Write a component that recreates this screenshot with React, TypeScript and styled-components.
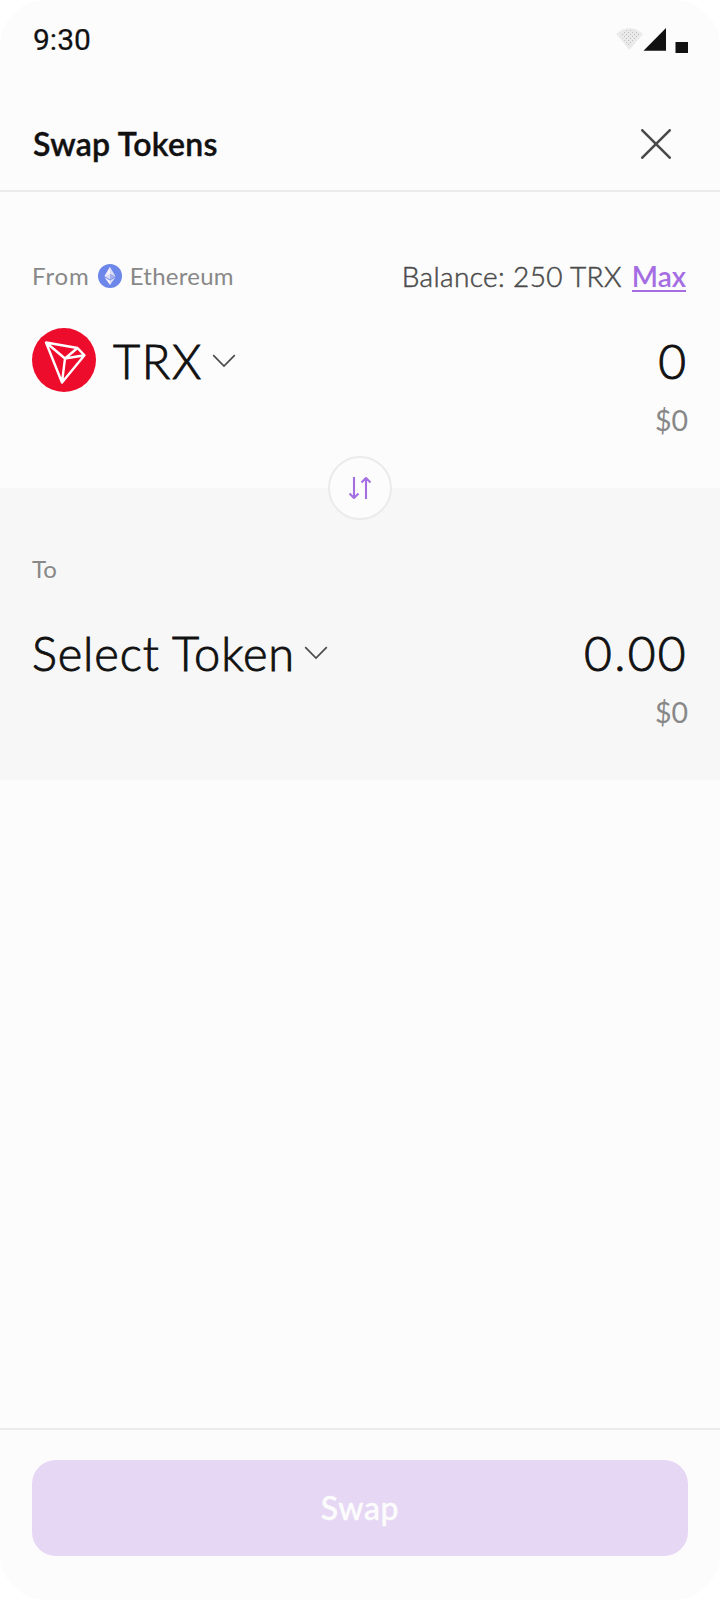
import React from 'react';
import styled, { createGlobalStyle } from 'styled-components';

const Global = createGlobalStyle`
  * { box-sizing: border-box; }
  body { margin: 0; background: #fff; font-family: Lato, "Open Sans", sans-serif; color: #111; }
  svg { display: block; flex: none; }
`;

const Screen = styled.main`
  width: 720px;
  height: 1600px;
  display: flex;
  flex-direction: column;
  background: #fcfcfc;
  border-radius: 46px;
  overflow: hidden;
`;

const StatusBar = styled.div`
  height: 96px;
  padding: 20px 32px 0 33px;
  display: flex;
  justify-content: space-between;
`;

const Clock = styled.span`
  font: 400 30px/40px Roboto, sans-serif;
  -webkit-text-stroke: 0.2px #111;
`;

const Header = styled.header`
  height: 96px;
  padding: 2px 49px 0 33px;
  display: flex;
  align-items: center;
  justify-content: space-between;
  border-bottom: 2px solid #ebebeb;
`;

const Title = styled.h1`
  margin: 0;
  font-size: 32px;
  font-weight: 600;
  line-height: 40px;
  letter-spacing: 0.3px;
  -webkit-text-stroke: 0.4px #111;
`;

const IconButton = styled.button`
  padding: 0;
  border: 0;
  background: none;
`;

const Panel = styled.section<{ $to?: boolean }>`
  position: relative;
  height: ${(p) => (p.$to ? 292 : 296)}px;
  padding: ${(p) => (p.$to ? 63 : 66)}px 32px 0;
  background: ${(p) => (p.$to ? '#f7f7f7' : '#fcfcfc')};
`;

const Line = styled.div`
  height: 36px;
  display: flex;
  align-items: center;
  justify-content: space-between;
`;

const Network = styled.div`
  display: flex;
  align-items: center;
  gap: 8px;
`;

const Label = styled.span<{ $spacing?: number }>`
  font-size: 24px;
  line-height: 36px;
  letter-spacing: ${(p) => p.$spacing ?? 0}px;
  color: #888;
`;

const Balance = styled.div`
  display: flex;
  align-items: center;
  gap: 10px;
  font-size: 28px;
  line-height: 34px;
`;

const BalanceText = styled.span`
  font-weight: 300;
  letter-spacing: 0.37px;
  color: #4b4b4b;
  -webkit-text-stroke: 0.5px #4b4b4b;
`;

const MaxLink = styled.a`
  margin-right: 2px;
  height: 32px;
  line-height: 32px;
  font-weight: 600;
  color: #a56de2;
  border-bottom: 2px solid #a56de2;
`;

const TokenLine = styled.div<{ $gap: number }>`
  height: 64px;
  margin-top: ${(p) => p.$gap}px;
  display: flex;
  align-items: center;
  justify-content: space-between;
`;

const TokenPicker = styled.div`
  display: flex;
  align-items: center;
`;

const Big = styled.span<{ $spacing?: number }>`
  padding-top: 2px;
  font-size: 47px;
  font-weight: 300;
  line-height: 62px;
  letter-spacing: ${(p) => p.$spacing ?? 0}px;
  -webkit-text-stroke: 0.9px #111;
`;

const Amount = styled(Big)`
  font-size: 48px;
`;

const TokenName = styled(Big)<{ $left: number; $right: number }>`
  margin-left: ${(p) => p.$left}px;
  margin-right: ${(p) => p.$right}px;
`;

const Fiat = styled.div`
  margin-top: 8px;
  font-size: 28.5px;
  line-height: 40px;
  text-align: right;
  color: #888;
`;

const Flip = styled.button`
  position: absolute;
  z-index: 1;
  left: 328px;
  bottom: -32px;
  width: 64px;
  height: 64px;
  padding: 0;
  display: grid;
  place-items: center;
  border: 2px solid #ebebeb;
  border-radius: 50%;
  background: #fcfcfc;
`;

const Footer = styled.footer`
  margin-top: auto;
  height: 172px;
  padding: 30px 32px 44px;
  border-top: 2px solid #ebebeb;
`;

const SwapButton = styled.button`
  width: 100%;
  height: 96px;
  padding: 0 0 1px;
  border: 0;
  border-radius: 24px;
  background: #e6d7f4;
  color: #fcfcfc;
  font: 500 32px/40px Lato, sans-serif;
  letter-spacing: 0.6px;
  -webkit-text-stroke: 0.4px #fcfcfc;
`;

const StatusIcons = () => (
  <svg width="72" height="40" viewBox="0 0 72 40">
    <defs>
      <pattern id="dots" width="4" height="4" patternUnits="userSpaceOnUse">
        <rect width="4" height="4" fill="#e9e9e9" />
        <rect width="1" height="1" fill="#bdbdbd" />
        <rect x="2" y="2" width="1" height="1" fill="#bdbdbd" />
      </pattern>
    </defs>
    <path d="M0 14Q13.5 2 27 14L13.5 30Z" fill="#ebebeb" />
    <path d="M3 14Q13.5 5.5 24 14L13.5 27Z" fill="url(#dots)" />
    <path d="M27.5 30.7L50 8V30.7Z" fill="#111" />
    <rect x="59.5" y="22" width="13" height="11" fill="#111" />
  </svg>
);

const Chevron = () => (
  <svg width="24" height="16" viewBox="0 0 24 16" fill="none" stroke="#4b4b4b" strokeWidth="1.7">
    <path d="M1.2 3.2L12 14L22.8 3.2" />
  </svg>
);

const Ethereum = () => (
  <svg width="24" height="24" viewBox="0 0 24 24">
    <circle cx="12" cy="12" r="12" fill="#6c86ea" />
    <path d="M12 3L17.5 12.2L12 15.4L6.5 12.2Z" fill="#d9dcf4" />
    <path d="M12 3V9.7L6.5 12.2ZM12 16.5V21L6.5 13.3Z" fill="#f8f1f6" />
    <path d="M12 9.7L17.5 12.2L12 15.4Z" fill="#a3aeea" />
    <path d="M12 16.5V21L17.5 13.3Z" fill="#d9dcf4" />
  </svg>
);

const Tron = () => (
  <svg width="64" height="64" viewBox="0 0 64 64">
    <circle cx="32" cy="32" r="32" fill="#ed0c2b" />
    <path
      d="M14 14.5L45.5 20L52.5 27.3L30 54.5ZM14 14.5L33 30.5L30 54.5M33 30.5L45.5 20M33 30.5L52.5 27.3"
      fill="none"
      stroke="#fff"
      strokeWidth="2.4"
      strokeLinejoin="round"
    />
  </svg>
);

export default function App() {
  return (
    <>
      <Global />
      <Screen>
        <StatusBar>
          <Clock>9:30</Clock>
          <StatusIcons />
        </StatusBar>
        <Header>
          <Title>Swap Tokens</Title>
          <IconButton aria-label="Close">
            <svg width="30" height="30" viewBox="0 0 30 30" stroke="#4b4b4b" strokeWidth="2.6" strokeLinecap="round">
              <path d="M1.3 1.3L28.7 28.7M28.7 1.3L1.3 28.7" />
            </svg>
          </IconButton>
        </Header>
        <Panel>
          <Line>
            <Network>
              <Label $spacing={0.9}>From</Label>
              <Ethereum />
              <Label $spacing={0.25}>Ethereum</Label>
            </Network>
            <Balance>
              <BalanceText>Balance: 250 TRX</BalanceText>
              <MaxLink>Max</MaxLink>
            </Balance>
          </Line>
          <TokenLine $gap={34}>
            <TokenPicker>
              <Tron />
              <TokenName $left={17} $right={9} $spacing={1.6}>TRX</TokenName>
              <Chevron />
            </TokenPicker>
            <Amount $spacing={2}>0</Amount>
          </TokenLine>
          <Fiat>$0</Fiat>
          <Flip aria-label="Switch direction">
            <svg width="22" height="22" viewBox="0 0 22 22" fill="none" stroke="#a56de2" strokeWidth="2.1">
              <path d="M5 0V21M0.5 16.5L5 21L9.5 16.5M17 22V1M12.5 5.5L17 1L21.5 5.5" />
            </svg>
          </Flip>
        </Panel>
        <Panel $to>
          <Line>
            <Label>To</Label>
          </Line>
          <TokenLine $gap={33}>
            <TokenPicker>
              <TokenName $left={0} $right={9} $spacing={0.85}>Select Token</TokenName>
              <Chevron />
            </TokenPicker>
            <Amount $spacing={2.3}>0.00</Amount>
          </TokenLine>
          <Fiat>$0</Fiat>
        </Panel>
        <Footer>
          <SwapButton>Swap</SwapButton>
        </Footer>
      </Screen>
    </>
  );
}
